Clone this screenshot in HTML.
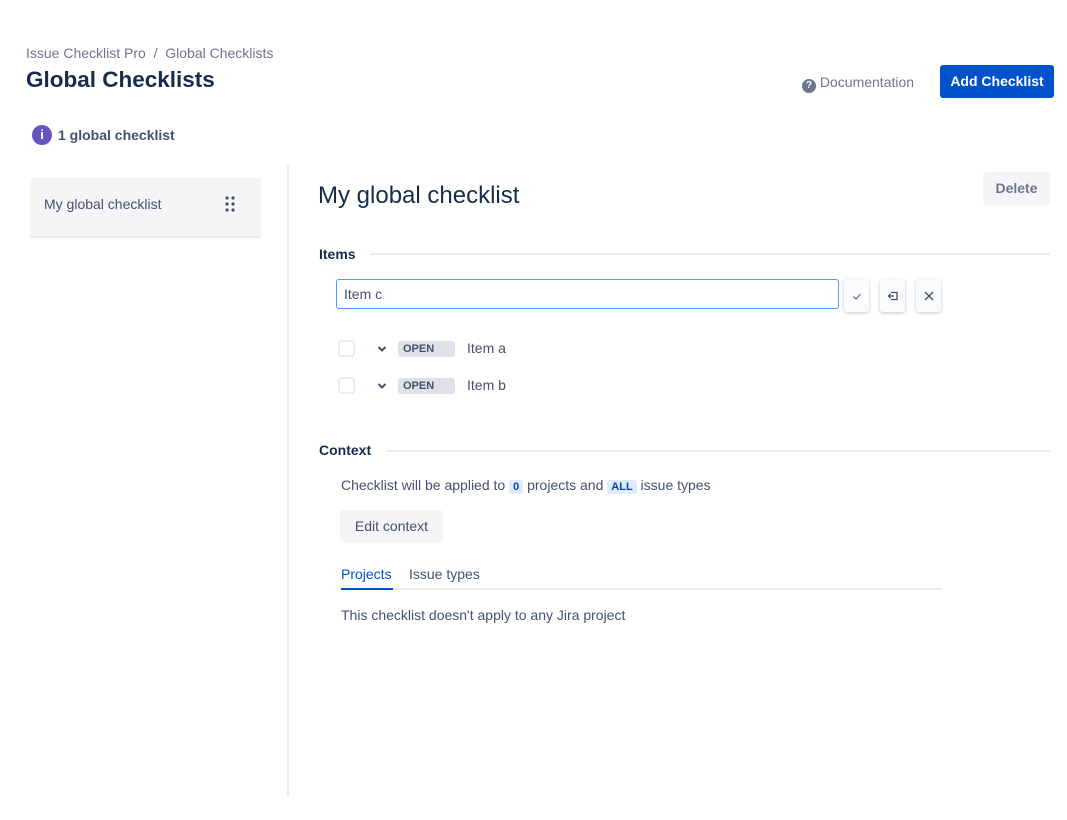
<!DOCTYPE html>
<html><head><style>
*{box-sizing:border-box;margin:0;padding:0}
body{width:1067px;height:820px;background:#fff;font-family:"Liberation Sans",sans-serif;color:#172b4d;position:relative;overflow:hidden;font-size:14px}
.a{position:absolute;white-space:nowrap}
.ib{width:25px;height:33px;border-radius:3px;background:#fafbfc;box-shadow:0 1px 3px rgba(9,30,66,.25);display:flex;align-items:center;justify-content:center}
</style></head><body>
<div class="a" style="left:26px;top:45px;font-size:14px;color:#6b778c">Issue Checklist Pro &nbsp;/&nbsp; Global Checklists</div>
<div class="a" style="left:26px;top:67px;font-size:22.5px;font-weight:bold;color:#172b4d">Global Checklists</div>
<div class="a" style="left:802px;top:74px;font-size:14px;color:#6b778c"><span style="display:inline-block;width:14px;height:14px;border-radius:50%;background:#6b778c;color:#fff;font-size:10px;text-align:center;line-height:14px;font-weight:bold;vertical-align:-1px">?</span> Documentation</div>
<div class="a" style="left:940px;top:65px;width:114px;height:33px;background:#0052cc;border-radius:3px;color:#fff;font-weight:bold;font-size:14px;text-align:center;line-height:33px">Add Checklist</div>
<div class="a" style="left:32px;top:125px;width:20px;height:20px;border-radius:50%;background:#6554c0;color:#fff;text-align:center;line-height:20px;font-weight:bold;font-size:13px">i</div>
<div class="a" style="left:58px;top:127px;font-size:14px;font-weight:bold;color:#42526e">1 global checklist</div>
<div class="a" style="left:30px;top:178px;width:231px;height:60px;background:#f4f5f7;border-bottom:2px solid #ebecf0"></div>
<div class="a" style="left:44px;top:196px;font-size:14px;color:#42526e">My global checklist</div>
<svg class="a" style="left:224px;top:195px" width="12" height="18"><g fill="#42526e"><circle cx="3" cy="3" r="1.6"/><circle cx="9" cy="3" r="1.6"/><circle cx="3" cy="9" r="1.6"/><circle cx="9" cy="9" r="1.6"/><circle cx="3" cy="15" r="1.6"/><circle cx="9" cy="15" r="1.6"/></g></svg>
<div class="a" style="left:287px;top:165px;width:2px;height:632px;background:#ebecf0"></div>
<div class="a" style="left:318px;top:182px;font-size:24px;color:#172b4d">My global checklist</div>
<div class="a" style="left:983px;top:172px;width:67px;height:33px;background:#f4f5f7;border-radius:3px;color:#6b778c;font-weight:bold;text-align:center;line-height:33px">Delete</div>
<div class="a" style="left:319px;top:246px;font-weight:bold;font-size:14px">Items</div>
<div class="a" style="left:370px;top:253px;width:680px;height:2px;background:#ebecf0"></div>
<div class="a" style="left:336px;top:279px;width:503px;height:30px;border:1px solid #4c9aff;border-radius:3px;padding-left:7px;line-height:28px;color:#42526e">Item c</div>
<div class="a ib" style="left:844px;top:279px"><svg width="12" height="12"><path d="M2.5 6.5l2.5 2.5 4.5-5" stroke="#6b778c" stroke-width="1.3" fill="none"/></svg></div>
<div class="a ib" style="left:880px;top:279px"><svg width="12" height="12"><path d="M4 2.5h6v7H4M7 6H1.5M3.5 4L1.5 6l2 2" stroke="#42526e" stroke-width="1.3" fill="none"/></svg></div>
<div class="a ib" style="left:916px;top:279px"><svg width="12" height="12"><path d="M2 2l8 8M10 2l-8 8" stroke="#42526e" stroke-width="1.4"/></svg></div>
<div class="a" style="left:338px;top:340px;width:17px;height:17px;border:2px solid #ebecf0;border-radius:3px"></div>
<svg class="a" style="left:377px;top:345px" width="10" height="8"><path d="M1.5 2l3.5 3.5L8.5 2" stroke="#42526e" stroke-width="2" fill="none"/></svg>
<div class="a" style="left:398px;top:341px;width:57px;height:16px;background:#dfe1e6;border-radius:3px;font-size:11px;font-weight:bold;color:#42526e;padding-left:5px;line-height:16px">OPEN</div>
<div class="a" style="left:467px;top:340px;color:#42526e">Item a</div>
<div class="a" style="left:338px;top:377px;width:17px;height:17px;border:2px solid #ebecf0;border-radius:3px"></div>
<svg class="a" style="left:377px;top:382px" width="10" height="8"><path d="M1.5 2l3.5 3.5L8.5 2" stroke="#42526e" stroke-width="2" fill="none"/></svg>
<div class="a" style="left:398px;top:378px;width:57px;height:16px;background:#dfe1e6;border-radius:3px;font-size:11px;font-weight:bold;color:#42526e;padding-left:5px;line-height:16px">OPEN</div>
<div class="a" style="left:467px;top:377px;color:#42526e">Item b</div>
<div class="a" style="left:319px;top:442px;font-weight:bold">Context</div>
<div class="a" style="left:387px;top:450px;width:663px;height:2px;background:#ebecf0"></div>
<div class="a" style="left:341px;top:477px;color:#42526e">Checklist will be applied to <span style="background:#deebff;color:#0747a6;font-size:11px;font-weight:bold;padding:1px 4px;border-radius:3px">0</span> projects and <span style="background:#deebff;color:#0747a6;font-size:11px;font-weight:bold;padding:1px 4px;border-radius:3px">ALL</span> issue types</div>
<div class="a" style="left:340px;top:510px;width:103px;height:33px;background:#f4f5f7;border-radius:3px;text-align:center;line-height:33px;color:#42526e">Edit context</div>
<div class="a" style="left:341px;top:566px;color:#0052cc">Projects</div>
<div class="a" style="left:409px;top:566px;color:#42526e">Issue types</div>
<div class="a" style="left:341px;top:588px;width:601px;height:2px;background:#ebecf0"></div>
<div class="a" style="left:341px;top:588px;width:52px;height:2px;background:#0052cc"></div>
<div class="a" style="left:341px;top:607px;color:#42526e">This checklist doesn't apply to any Jira project</div>
</body></html>
